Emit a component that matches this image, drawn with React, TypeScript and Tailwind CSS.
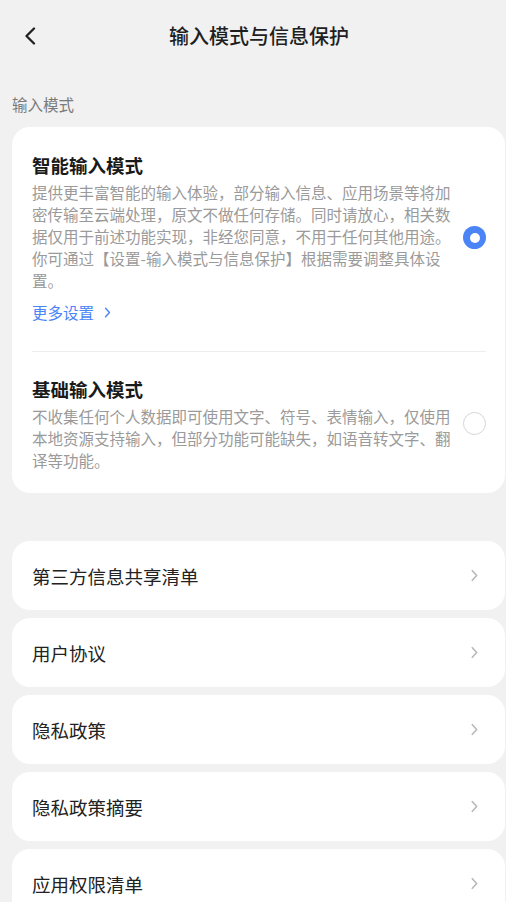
const links = ["第三方信息共享清单", "用户协议", "隐私政策", "隐私政策摘要", "应用权限清单"] as const;

function Radio({ checked }: { checked: boolean }) {
  return checked ? (
    <span className="flex h-[23px] w-[23px] shrink-0 items-center justify-center rounded-full bg-[#4a84f6]">
      <span className="h-[10px] w-[10px] rounded-full bg-white" />
    </span>
  ) : (
    <span className="h-[23px] w-[23px] shrink-0 rounded-full border-[1.5px] border-[#d6d6d6] bg-white" />
  );
}

function Arrow({ className }: { className: string }) {
  return (
    <svg viewBox="0 0 8 14" className={className} fill="none" stroke="currentColor" strokeWidth={1.8} strokeLinecap="round" strokeLinejoin="round">
      <path d="M1.5 1.5 6.5 7 1.5 12.5" />
    </svg>
  );
}

export default function App() {
  return (
    <div className="min-h-screen bg-[#f1f1f1] pb-10 font-['Noto_Sans_CJK_SC','Noto_Sans',sans-serif] text-[#1f1f1f]">
      {/* header */}
      <header className="flex h-[72px] items-center">
        <div className="flex w-[60px] items-center pl-[24px] text-[#222]">
          <svg viewBox="0 0 12 18" className="h-[18px] w-[12px]" fill="none" stroke="currentColor" strokeWidth={2.3} strokeLinecap="round" strokeLinejoin="round">
            <path d="M10 1.5 2.5 9 10 16.5" />
          </svg>
        </div>
        <h1 className="flex-1 text-center text-[20px] font-medium leading-[28px]">输入模式与信息保护</h1>
        <div className="w-[48px]" />
      </header>

      <p className="mt-[21px] pl-3 text-[15.5px] leading-[22px] text-[#7a7a7a]">输入模式</p>

      {/* mode card */}
      <section className="ml-3 mr-px mt-[12px] rounded-[18px] bg-white pl-5 pr-[19px]">
        <div className="flex items-center justify-between pb-[28px] pt-[25px]">
          <div className="w-[424px]">
            <h2 className="text-[18.5px] font-bold leading-[26px] text-[#1a1a1a]">智能输入模式</h2>
            <p className="mt-[3px] text-[15.5px] leading-[22px] text-[#9a9a9a]">
              提供更丰富智能的输入体验，部分输入信息、应用场景等将加密传输至云端处理，原文不做任何存储。同时请放心，相关数据仅用于前述功能实现，非经您同意，不用于任何其他用途。你可通过【设置-输入模式与信息保护】根据需要调整具体设置。
            </p>
            <button className="mt-[10px] flex items-center gap-[10px] text-[15.5px] leading-[22px] text-[#4a84f6]">
              更多设置
              <Arrow className="h-[11px] w-[7px]" />
            </button>
          </div>
          <Radio checked />
        </div>

        <div className="h-px bg-[#ededed]" />

        <div className="flex items-center justify-between pb-[22px] pt-6">
          <div className="w-[424px]">
            <h2 className="text-[18.5px] font-bold leading-[26px] text-[#1a1a1a]">基础输入模式</h2>
            <p className="mt-[3px] text-[15.5px] leading-[22px] text-[#9a9a9a]">
              不收集任何个人数据即可使用文字、符号、表情输入，仅使用本地资源支持输入，但部分功能可能缺失，如语音转文字、翻译等功能。
            </p>
          </div>
          <Radio checked={false} />
        </div>
      </section>

      {/* links */}
      <div className="ml-3 mr-px mt-[48px] flex flex-col gap-2">
        {links.map((label) => (
          <div key={label} className="flex h-[69px] items-center justify-between rounded-[18px] bg-white pl-5 pr-[27px]">
            <span className="text-[18.5px] leading-[26px] text-[#222]">{label}</span>
            <Arrow className="h-[13px] w-[7px] text-[#b8b8b8]" />
          </div>
        ))}
      </div>
    </div>
  );
}
